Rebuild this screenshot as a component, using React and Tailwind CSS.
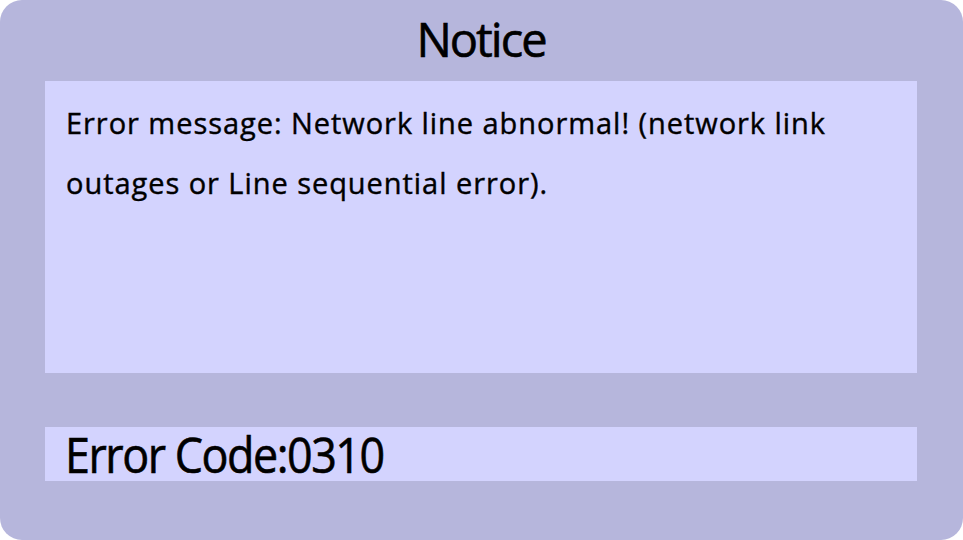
import React from 'react';

const font = { fontFamily: '"Open Sans", "Noto Sans", sans-serif' };

const App = () => {
  return (
    <div className="w-[963px] h-[540px] bg-white" style={font}>
      <div className="w-full h-full bg-[#b6b6dc] rounded-[22px] px-[45px] pr-[46px] flex flex-col">
        {/* Title */}
        <div className="h-[81px] flex items-center justify-center">
          <h1 className="text-[47px] text-black leading-none tracking-[-2px] -mt-[2px] [-webkit-text-stroke:0.6px_black]">Notice</h1>
        </div>

        {/* Message */}
        <div className="h-[292px] bg-[#d3d3fe] px-[21px] pt-[26px]">
          <p className="max-w-[800px] text-[29px] leading-[60px] text-black tracking-[0.95px] -mt-[14px] [-webkit-text-stroke:0.4px_black]">
            Error message: Network line abnormal! (network link outages or Line sequential error).
          </p>
        </div>

        {/* Code */}
        <div className="mt-[54px] h-[54px] bg-[#d3d3fe] px-[20px] flex items-center">
          <span className="inline-block origin-left scale-x-[0.915] text-[49px] leading-none text-black tracking-[-1.6px] [-webkit-text-stroke:0.6px_black]">Error Code:0310</span>
        </div>
      </div>
    </div>
  );
};

export default App;
